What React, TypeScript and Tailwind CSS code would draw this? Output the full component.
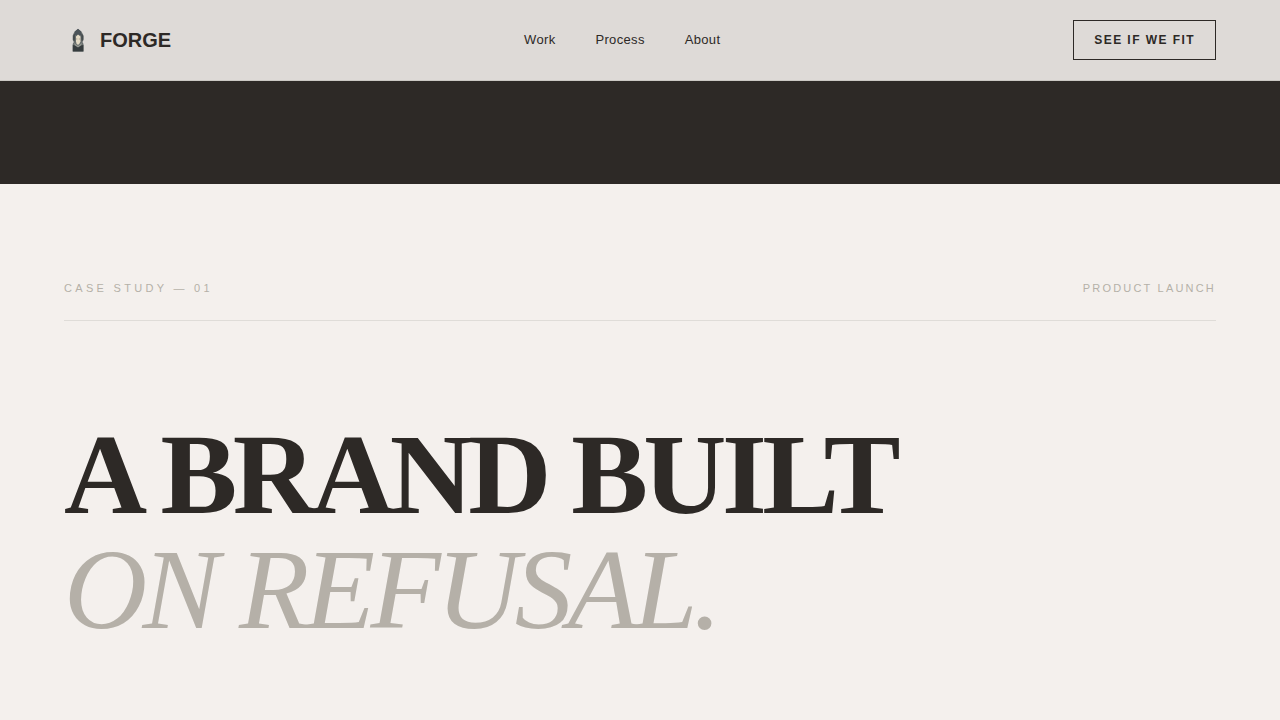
function ForgeMark() {
  return (
    <svg viewBox="0 0 28 28" className="size-7 shrink-0" aria-hidden="true">
      <path d="M14 3L17.500 5.500L19.500 9.500V14L18.500 16L19.500 18V25.500H8.700V18L9.800 16L8.700 14V9.500L10.500 5.500Z" fill="#686e6e" />
      <path d="M14 2.800L17 5.500V9L14 10L11 9V5.500Z" fill="#4b5358" />
      <path d="M9 10L11 7V13L10.500 15.500L9 13.500ZM19.300 10L17.300 7V13L17.800 15.500L19.300 13.500Z" fill="#454c4e" />
      <path d="M12 10.500L14 8.500L16.500 10.500V15.500L15.500 17.500L14 19L12.500 17.500L12 15.500Z" fill="#e4dac5" />
      <path d="M12 12.500H13.400V13.400H12ZM14.800 12.500H16.300V13.400H14.800Z" fill="#aaa291" />
      <path d="M10 17L14 20L18 17L16.500 21L14 22L11.500 21Z" fill="#989b94" />
      <path d="M8.800 19L11 19.500L14 21.500L17 19.500L19.400 19V25.500H8.800Z" fill="#363c3e" />
    </svg>
  );
}

const links = [
  { label: "Work", href: "#work" },
  { label: "Process", href: "#process" },
  { label: "About", href: "#about" },
];

export default function App() {
  return (
    <div className="min-h-screen bg-[#f4f0ed] font-['Liberation_Sans',sans-serif] text-[#2d2926]">
      <header className="border-b border-[#cbc8c4] bg-[#dedad7]">
        <div className="flex h-20 items-center justify-between px-16">
          <a href="#top" className="flex items-center gap-2 text-xl font-bold">
            <ForgeMark />
            FORGE
          </a>
          <nav aria-label="Main" className="flex gap-10 text-[13px] tracking-wide">
            {links.map((link) => (
              <a key={link.href} href={link.href}>
                {link.label}
              </a>
            ))}
          </nav>
          <button type="button" className="h-10 border border-[#2d2926] px-5 text-xs font-bold tracking-[0.12em]">
            SEE IF WE FIT
          </button>
        </div>
      </header>
      <main>
        <div className="h-[103px] bg-[#2d2926]" />
        <section id="work" className="px-16 pt-24">
          <div className="flex items-center justify-between border-b border-[#dfdcd8] pb-6 text-[11px] leading-4 text-[#b5b0a8]">
            <p className="tracking-[0.3em]">CASE STUDY — 01</p>
            <p className="tracking-[0.2em]">PRODUCT LAUNCH</p>
          </div>
          <h1 className="pt-24 pb-8 font-['Liberation_Serif',serif] text-[9vw] leading-none font-bold tracking-[-0.04em]">
            A BRAND BUILT
            <em className="block font-normal text-[#b5b0a8]">ON REFUSAL.</em>
          </h1>
        </section>
      </main>
    </div>
  );
}
